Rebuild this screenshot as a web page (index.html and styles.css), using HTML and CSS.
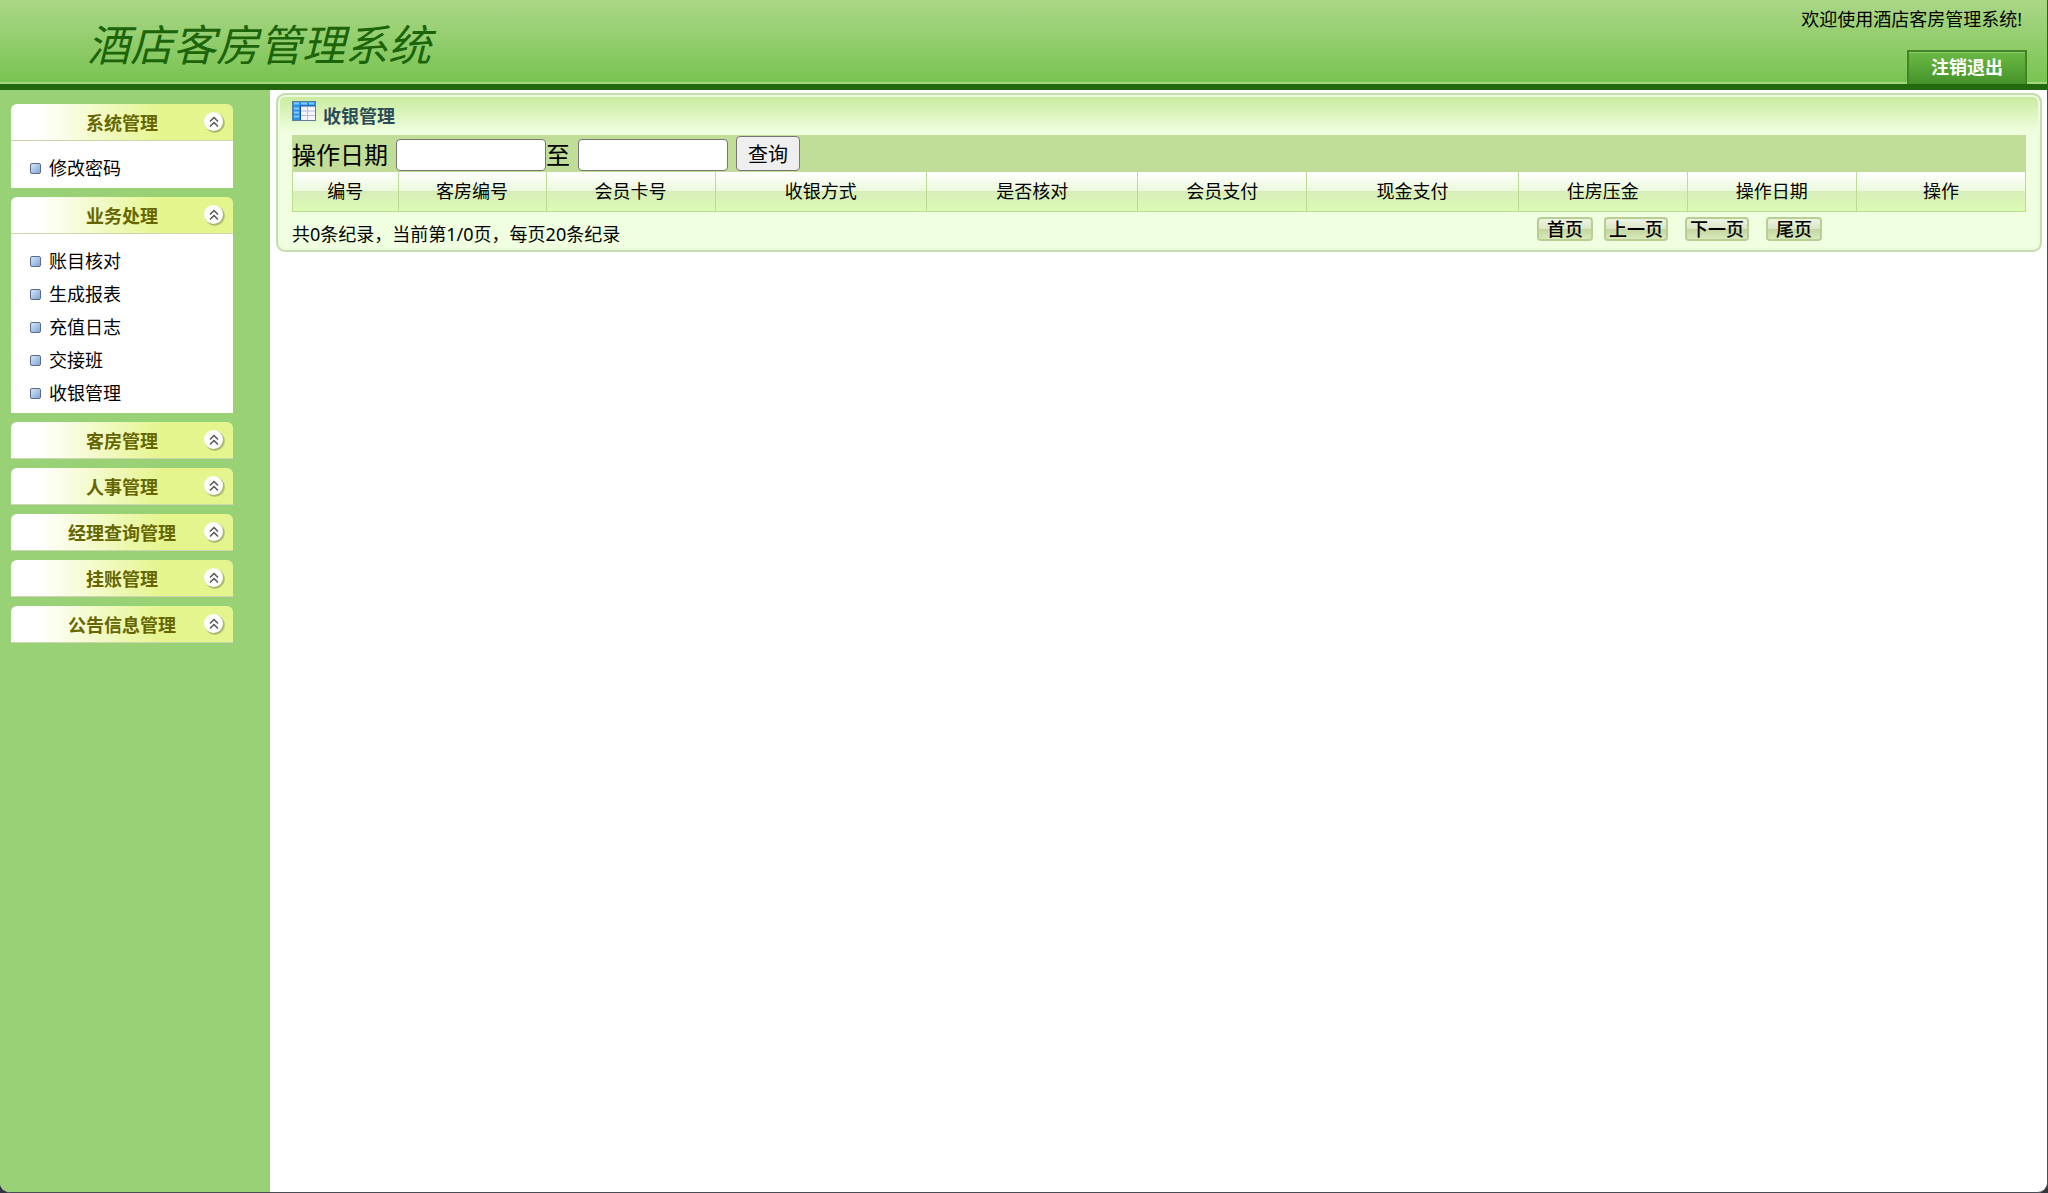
FILE: index.html
```
<!DOCTYPE html>
<html lang="zh-CN">
<head>
    <meta charset="UTF-8">
    <meta name="viewport" content="width=device-width, initial-scale=1.0">
    <title>酒店客房管理系统</title>
    <link rel="stylesheet" href="styles.css">
</head>
<body>
    <svg class="sprite" aria-hidden="true">
        <symbol id="arrow" viewBox="0 0 24 24">
            <circle cx="13" cy="13" r="10" fill="#8c9460" opacity="0.35"/>
            <circle cx="12.5" cy="12.5" r="10" fill="#8c9460" opacity="0.45"/>
            <circle cx="11.5" cy="11.5" r="9.5" fill="#fff"/>
            <path d="M8 11.500l4-4 4 4M8 16.500l4-4 4 4" fill="none" stroke="#555" stroke-width="1.5"/>
        </symbol>
    </svg>
    <div class="window">
        <header class="header">
            <h1>酒店客房管理系统</h1>
            <div class="header-right">
                <span class="welcome">欢迎使用酒店客房管理系统!</span>
                <a class="logout" href="#">注销退出</a>
            </div>
        </header>
        <div class="main">
            <nav class="sidebar">
                <section class="menu">
                    <button class="menu-title" type="button">系统管理<svg><use href="#arrow"/></svg></button>
                    <ul>
                        <li><a href="#">修改密码</a></li>
                    </ul>
                </section>
                <section class="menu">
                    <button class="menu-title" type="button">业务处理<svg><use href="#arrow"/></svg></button>
                    <ul>
                        <li><a href="#">账目核对</a></li>
                        <li><a href="#">生成报表</a></li>
                        <li><a href="#">充值日志</a></li>
                        <li><a href="#">交接班</a></li>
                        <li><a href="#">收银管理</a></li>
                    </ul>
                </section>
                <section class="menu">
                    <button class="menu-title" type="button">客房管理<svg><use href="#arrow"/></svg></button>
                </section>
                <section class="menu">
                    <button class="menu-title" type="button">人事管理<svg><use href="#arrow"/></svg></button>
                </section>
                <section class="menu">
                    <button class="menu-title" type="button">经理查询管理<svg><use href="#arrow"/></svg></button>
                </section>
                <section class="menu">
                    <button class="menu-title" type="button">挂账管理<svg><use href="#arrow"/></svg></button>
                </section>
                <section class="menu">
                    <button class="menu-title" type="button">公告信息管理<svg><use href="#arrow"/></svg></button>
                </section>
            </nav>
            <main class="content">
                <section class="panel">
                    <h2>
                        <svg width="24" height="20" viewBox="0 0 24 20">
                            <rect width="24" height="20" fill="#5d7c9e"/>
                            <rect x="1" y="1" width="22" height="18" fill="#f4f6fb"/>
                            <rect x="1" y="1" width="22" height="4" fill="#2d8bea"/>
                            <rect x="1" y="1" width="7" height="18" fill="#2491ef"/>
                            <path d="M2 2.500h5M9 2.500h6M17 2.500h5M2 7.500h5M2 11.500h5M2 15.500h5" stroke="#7fd0ff" stroke-width="2"/>
                            <path d="M8 5h15M8.500 5v14" stroke="#1c4fa0" fill="none"/>
                            <path d="M9 10h14M9 14.500h14M15.500 6v13" stroke="#b9bdd6" fill="none"/>
                        </svg>
                        <span>收银管理</span>
                    </h2>
                    <form class="search">
                        <label for="startDate">操作日期</label>
                        <input type="text" id="startDate">
                        <label for="endDate">至</label>
                        <input type="text" id="endDate">
                        <button type="submit">查询</button>
                    </form>
                    <table>
                        <colgroup>
                            <col class="w5"><col class="w7"><col class="w8"><col class="w10"><col class="w10">
                            <col class="w8"><col class="w10"><col class="w8"><col class="w8"><col class="w8">
                        </colgroup>
                        <thead>
                            <tr>
                                <th>编号</th>
                                <th>客房编号</th>
                                <th>会员卡号</th>
                                <th>收银方式</th>
                                <th>是否核对</th>
                                <th>会员支付</th>
                                <th>现金支付</th>
                                <th>住房压金</th>
                                <th>操作日期</th>
                                <th>操作</th>
                            </tr>
                        </thead>
                    </table>
                    <div class="footer">
                        <span>共0条纪录，当前第1/0页，每页20条纪录</span>
                        <div class="pager">
                            <button type="button">首页</button>
                            <button type="button" class="wide">上一页</button>
                            <button type="button" class="wide apart">下一页</button>
                            <button type="button" class="apart">尾页</button>
                        </div>
                    </div>
                </section>
            </main>
        </div>
    </div>
</body>
</html>
```
FILE: styles.css
```
* {
    box-sizing: border-box;
}

html {
    background: #34363f;
}

body {
    margin: 0;
    font-family: "Noto Sans", "Noto Sans CJK SC", sans-serif;
    font-size: 18px;
    color: #000;
}

button,
input {
    font-family: inherit;
    font-weight: inherit;
    color: inherit;
}

a {
    color: inherit;
    text-decoration: none;
}

.sprite {
    display: none;
}

.window {
    display: flex;
    flex-direction: column;
    min-height: 100vh;
    border: solid #4a4c54;
    border-width: 0 1px 1px 0;
    border-radius: 0 0 10px 10px;
    background: #fff;
    overflow: hidden;
}

/* header */
.header {
    display: flex;
    justify-content: space-between;
    height: 90px;
    padding: 0 20px 0 87px;
    border-bottom: 6px solid #23670f;
    background: linear-gradient(#abd787, #78c351);
    box-shadow: inset 0 -2px #a3d880;
}

.header h1 {
    margin: 0;
    font-size: 43px;
    font-weight: 400;
    font-style: italic;
    line-height: 90px;
    color: #1b6409;
}

.header-right {
    display: flex;
    flex-direction: column;
    justify-content: space-between;
    align-items: flex-end;
}

.welcome {
    padding-right: 5px;
    line-height: 38px;
}

.logout {
    width: 120px;
    height: 34px;
    border: 2px solid #43842a;
    border-bottom: 0;
    background: linear-gradient(#6bba44, #46922a);
    box-shadow: inset 0 1px #84cb62;
    font-weight: bold;
    line-height: 30px;
    text-align: center;
    color: #fff;
}

.main {
    display: flex;
    flex: 1;
}

/* left menu */
.sidebar {
    display: flex;
    flex-direction: column;
    gap: 9px;
    flex: 0 0 270px;
    padding: 14px 37px 14px 11px;
    background: #99d177;
}

.menu-title {
    display: grid;
    grid-template-columns: 38px 1fr 38px;
    align-items: center;
    width: 100%;
    height: 37px;
    padding: 0 0 1px;
    border: 0;
    border-bottom: 1px solid #cfd5ae;
    border-radius: 6px 6px 0 0;
    background: linear-gradient(90deg, #fff 12%, #e5f58d 68%);
    font-size: 18px;
    font-weight: bold;
    color: #666600;
    cursor: pointer;
}

.menu-title::before {
    content: "";
}

.menu-title svg {
    width: 24px;
    height: 24px;
    justify-self: center;
}

.menu ul {
    margin: 0;
    padding: 11px 0 3px 19px;
    background: #fff;
    list-style: none;
}

.menu li {
    display: flex;
    align-items: center;
    gap: 8px;
    height: 33px;
    line-height: 24px;
    padding-bottom: 2px;
}

.menu li::before {
    content: "";
    width: 9px;
    height: 9px;
    margin-top: 2px;
    border: 1px solid #5b6a85;
    border-radius: 2px;
    background: linear-gradient(135deg, #d3e5fb, #7fa6d8);
}

/* content */
.content {
    flex: 1;
    padding: 3px 5px 0 6px;
}

.panel {
    padding: 0 14px;
    border: 2px solid #c5dbb0;
    border-radius: 9px;
    background: linear-gradient(#c8eb9c, #f0ffe0 38px);
    box-shadow: inset 0 0 0 2px #ecfadd;
}

.panel h2 {
    display: flex;
    gap: 7px;
    height: 40px;
    margin: 0;
    padding-top: 6px;
    font-size: 18px;
    line-height: 30px;
    color: #2c4a57;
}

.search {
    display: flex;
    align-items: center;
    height: 37px;
    background: #c0de98;
    font-size: 24px;
}

.search input {
    width: 150px;
    height: 32px;
    margin: 3px 0 0 8px;
    border: 1px solid #767676;
    border-radius: 4px;
    background: #fff;
    font-size: 20px;
}

.search button {
    width: 64px;
    height: 35px;
    margin-left: 8px;
    padding: 0;
    border: 1px solid #767676;
    border-radius: 4px;
    background: #efefef;
    font-size: 20px;
}

table {
    width: 100%;
    border-collapse: collapse;
}

th {
    height: 39px;
    padding: 0 0 2px;
    border: 1px solid #bcdc96;
    border-top: 0;
    background: linear-gradient(#fff, #ebf8da 49%, #d7edb9 50%, #dcfcb4);
    font-weight: 400;
}

.w5 {
    width: 5%;
}

.w7 {
    width: 7%;
}

.w8 {
    width: 8%;
}

.w10 {
    width: 10%;
}

.footer {
    display: flex;
    justify-content: space-between;
    height: 38px;
    line-height: 44px;
}

.pager {
    display: flex;
    gap: 11px;
    width: 28.2%;
    padding-top: 5px;
}

.pager button {
    width: 56px;
    height: 24px;
    padding: 0;
    border: 2px solid #b7cf93;
    border-radius: 4px;
    background: linear-gradient(#eef3e4, #dbe6c6 49%, #c3d5a0 50%, #d9e9bc);
    font-size: 18px;
    font-weight: 500;
    line-height: 18px;
}

.pager .wide {
    width: 64px;
}

.pager .apart {
    margin-left: 6px;
}
```
